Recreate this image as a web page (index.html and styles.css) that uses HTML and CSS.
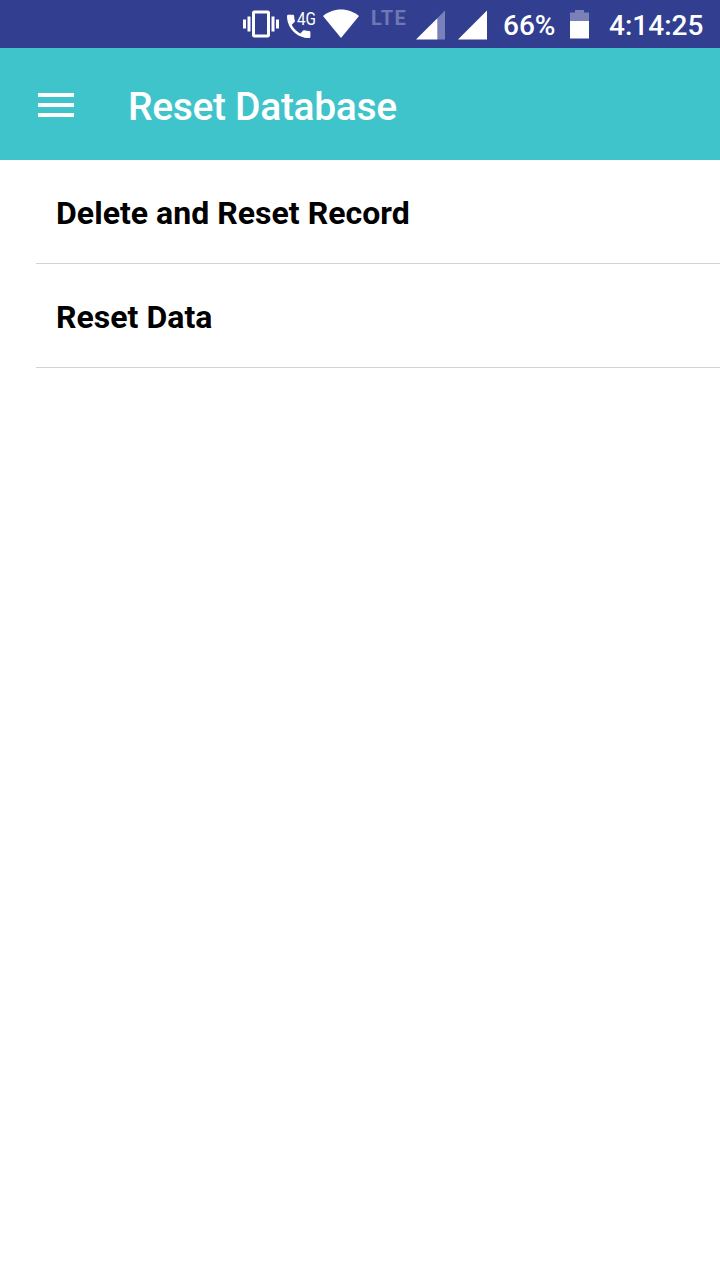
FILE: index.html
```html
<!DOCTYPE html>
<html lang="en">
<head>
<meta charset="utf-8">
<title>Reset Database</title>
<link rel="stylesheet" href="styles.css">
</head>
<body>
<div class="status-bar">
  <svg class="vibrate" width="36" height="48" viewBox="0 -4 24 32" fill="#fff"><path d="M0 15h2V9H0v6zm3 2h2V7H3v10zm19-8v6h2V9h-2zm-3 8h2V7h-2v10zM16.5 3h-9C6.67 3 6 3.67 6 4.5v15c0 .83.67 1.5 1.500 1.500h9c.83 0 1.500-.67 1.500-1.500v-15c0-.83-.67-1.500-1.500-1.500zM16 19H8V5h8v14z"/></svg>
  <svg class="call" width="34" height="48" viewBox="0 0 34 48" fill="#fff">
    <path transform="translate(-3.900 10.800) scale(1.300)" d="M6.62 10.79c1.44 2.83 3.76 5.14 6.59 6.59l2.2-2.2c.27-.27.67-.36 1.02-.24 1.12.37 2.33.57 3.57.57.55 0 1 .45 1 1V20c0 .55-.45 1-1 1-9.39 0-17-7.61-17-17 0-.55.45-1 1-1h3.5c.55 0 1 .45 1 1 0 1.25.2 2.45.57 3.57.11.35.03.74-.25 1.02l-2.2 2.2z"/>
    <text class="call-label" x="10" y="24.500" textLength="19" lengthAdjust="spacingAndGlyphs">4G</text>
  </svg>
  <svg class="wifi" width="36" height="48" viewBox="0 0 36 48"><path fill="#fff" d="M0 16C5 12 11 9.500 18 9.500S31 12 36 16L18 38Z"/></svg>
  <span class="lte">LTE</span>
  <svg class="signal" width="29" height="48" viewBox="0 0 29 48"><path fill="#7981b8" d="M21 18.500L29 10.500V39.500H21Z"/><path fill="#fff" d="M0 39.500L21.300 18.200V39.500Z"/></svg>
  <svg class="signal-full" width="29" height="48" viewBox="0 0 29 48"><path fill="#fff" d="M0 39.500L29 10.500V39.500Z"/></svg>
  <span class="percent">66%</span>
  <svg class="battery" width="19" height="48" viewBox="0 0 19 48"><path fill="#7981b8" d="M5 10H14V12.500H19V22H0V12.500H5Z"/><path fill="#fff" d="M0 21H19V38.500H0Z"/></svg>
  <span class="clock">4:14:25</span>
</div>
<header class="app-bar">
  <svg class="menu" width="36" height="26" viewBox="0 0 36 26" fill="#fff"><path d="M0 1H36V5H0ZM0 11H36V15H0ZM0 21H36V25H0Z"/></svg>
  <h1 class="title">Reset Database</h1>
</header>
<main class="list">
  <div class="item">Delete and Reset Record</div>
  <div class="item">Reset Data</div>
</main>
</body>
</html>
```
FILE: styles.css
```css
body {
  margin: 0;
  background: #fff;
  font-family: Roboto, sans-serif;
}

.status-bar {
  display: flex;
  height: 48px;
  padding-left: 243px;
  background: #323f90;
  color: #fff;
  font-size: 28px;
  font-weight: 500;
  line-height: 52px;
  white-space: nowrap;
}

.status-bar svg {
  flex: none;
}

.call {
  margin-left: 8px;
}

.call-label {
  font-size: 18px;
  font-weight: 400;
}

.wifi {
  margin-left: 2px;
}

.lte {
  width: 45px;
  margin-left: 12px;
  color: #6f78b2;
  font-size: 20px;
  font-weight: 700;
  letter-spacing: 1.2px;
  line-height: 36px;
}

.signal-full {
  margin-left: 13px;
}

.percent {
  width: 67px;
  margin-left: 16px;
}

.clock {
  margin-left: 20px;
}

.app-bar {
  display: flex;
  align-items: center;
  height: 112px;
  padding-left: 38px;
  background: #40c4cc;
}

.menu {
  margin-top: 2px;
}

.title {
  margin: 6px 0 0 54px;
  color: #fff;
  font-size: 39px;
  font-weight: 500;
  letter-spacing: -0.33px;
  line-height: 48px;
}

.list {
  margin-left: 36px;
}

.item {
  box-sizing: border-box;
  height: 104px;
  padding-left: 20px;
  border-bottom: 1px solid #d2d2d2;
  color: #000;
  font-size: 32px;
  font-weight: 700;
  letter-spacing: 0.03px;
  line-height: 106px;
}
```
